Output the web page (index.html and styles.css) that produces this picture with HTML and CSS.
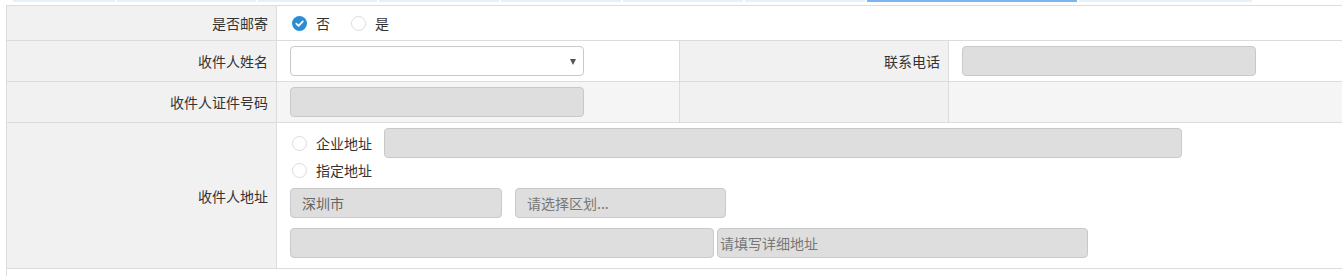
FILE: index.html
```html
<!DOCTYPE html>
<html lang="zh-CN">

<head>
    <meta charset="UTF-8">
    <title>收件信息</title>
    <link rel="stylesheet" href="styles.css">
</head>

<body>
    <div class="steps">
        <span class="step" style="width: 102px"></span>
        <span class="step" style="width: 139px"></span>
        <span class="step" style="width: 119px"></span>
        <span class="step" style="width: 120px"></span>
        <span class="step" style="width: 120px"></span>
        <span class="step" style="width: 120px"></span>
        <span class="step" style="width: 120px"></span>
        <span class="step active" style="width: 210px"></span>
        <span class="step" style="width: 173px"></span>
    </div>

    <div class="form-table">
        <!-- 是否邮寄 -->
        <div class="cell label row-1">是否邮寄</div>
        <div class="cell value span-3 row-1">
            <label class="radio">
                <span class="radio-icon checked">
                    <svg width="15" height="15" viewBox="0 0 15 15">
                        <circle cx="7.5" cy="7.5" r="7.5" fill="#2b8bd5" />
                        <path d="M4.3 7.6 L6.6 9.8 L10.8 5.4" fill="none" stroke="#fff" stroke-width="1.8"
                            stroke-linecap="round" stroke-linejoin="round" />
                    </svg>
                </span>
                否
            </label>
            <label class="radio">
                <span class="radio-icon"></span>
                是
            </label>
        </div>

        <!-- 收件人姓名 / 联系电话 -->
        <div class="cell label row-2">收件人姓名</div>
        <div class="cell value row-2">
            <div class="select-box">
                <span class="caret"></span>
            </div>
        </div>
        <div class="cell label row-2">联系电话</div>
        <div class="cell value last row-2">
            <input class="field w-294" type="text" disabled>
        </div>

        <!-- 收件人证件号码 -->
        <div class="cell label row-3">收件人证件号码</div>
        <div class="cell value striped row-3">
            <input class="field w-294" type="text" disabled>
        </div>
        <div class="cell label row-3"></div>
        <div class="cell value striped last row-3"></div>

        <!-- 收件人地址 -->
        <div class="cell label row-4">收件人地址</div>
        <div class="cell value span-3 address row-4">
            <div class="addr-line">
                <label class="radio">
                    <span class="radio-icon"></span>
                    企业地址
                </label>
                <input class="field w-798 ml-12" type="text" disabled>
            </div>
            <div class="addr-line short">
                <label class="radio">
                    <span class="radio-icon"></span>
                    指定地址
                </label>
            </div>
            <div class="addr-line gap-13">
                <input class="field w-212" type="text" value="深圳市" disabled>
                <input class="field w-211" type="text" placeholder="请选择区划..." disabled>
            </div>
            <div class="addr-line gap-3">
                <input class="field w-424" type="text" disabled>
                <input class="field w-371 tight" type="text" placeholder="请填写详细地址" disabled>
            </div>
        </div>

        <div class="cell blank span-4"></div>
    </div>
</body>

</html>
```

FILE: styles.css
```css
* {
    margin: 0;
    padding: 0;
    box-sizing: border-box;
}

html,
body {
    overflow: hidden;
}

body {
    font-family: 'Noto Sans CJK SC', 'Noto Sans', sans-serif;
    font-size: 14px;
    color: #333;
    background: #fff;
    width: 1342px;
    height: 276px;
}

.steps {
    display: flex;
    gap: 2px;
    height: 2px;
    margin: 0 0 3px 13px;
}

.step {
    display: block;
    height: 2px;
    background: #e6f1fd;
}

.step.active {
    background: #7cb6ee;
}

.form-table {
    display: grid;
    grid-template-columns: 270px 403px 269px 1fr;
    margin-left: 6px;
    border-top: 1px solid #dcdcdc;
    border-left: 1px solid #dcdcdc;
}

.cell {
    display: flex;
    align-items: center;
    border-right: 1px solid #dcdcdc;
    border-bottom: 1px solid #dcdcdc;
}

.cell.last {
    border-right: none;
}

.label {
    justify-content: flex-end;
    padding-right: 8px;
    background: #f1f1f1;
    color: #333;
}

.value {
    padding-left: 13px;
    background: #fff;
}

.striped {
    background: #f5f5f5;
}

.span-3 {
    grid-column: span 3;
    border-right: none;
}

.span-4 {
    grid-column: span 4;
    border-right: none;
    border-bottom: none;
}

.row-1 {
    height: 35px;
}

.row-2,
.row-3 {
    height: 41px;
}

.row-4 {
    height: 146px;
}

.blank {
    height: 7px;
    background: #fff;
}

/* radios */
.radio {
    display: inline-flex;
    align-items: center;
    gap: 9px;
    margin-left: 2px;
    margin-right: 19px;
    color: #333;
    cursor: pointer;
}

.radio-icon {
    display: inline-block;
    width: 15px;
    height: 15px;
    border-radius: 50%;
    border: 1px solid #dcdcdc;
    background: #fff;
}

.radio-icon.checked {
    border: none;
}

.radio-icon svg {
    display: block;
}

/* fields */
.field {
    height: 30px;
    border: 1px solid #c9c9c9;
    border-radius: 4px;
    background: #dedede;
    font-family: inherit;
    font-size: 14px;
    color: #666;
    padding: 0 11px;
    outline: none;
}

.field:disabled {
    color: #666;
    -webkit-text-fill-color: #666;
    opacity: 1;
}

.field::placeholder {
    color: #777;
    -webkit-text-fill-color: #777;
    opacity: 1;
}

.field.tight {
    padding: 0 2px;
}

.w-294 {
    width: 294px;
}

.w-798 {
    width: 798px;
}

.w-212 {
    width: 212px;
}

.w-211 {
    width: 211px;
}

.w-424 {
    width: 424px;
}

.w-371 {
    width: 371px;
}

.ml-12 {
    margin-left: 12px;
}

.select-box {
    position: relative;
    width: 294px;
    height: 30px;
    border: 1px solid #c9c9c9;
    border-radius: 4px;
    background: #fff;
}

.caret {
    position: absolute;
    right: 7px;
    top: 12px;
    width: 0;
    height: 0;
    border-left: 3px solid transparent;
    border-right: 3px solid transparent;
    border-top: 6px solid #555;
}

/* address block */
.address {
    flex-direction: column;
    align-items: flex-start;
    justify-content: flex-start;
    padding-top: 5px;
    padding-bottom: 10px;
}

.addr-line {
    display: flex;
    align-items: center;
    height: 30px;
}

.addr-line.short {
    height: 24px;
    margin-bottom: 6px;
}

.addr-line.gap-13 {
    gap: 13px;
    margin-bottom: 10px;
}

.addr-line.gap-3 {
    gap: 3px;
}

.addr-line .radio {
    margin-right: 0;
}
```
